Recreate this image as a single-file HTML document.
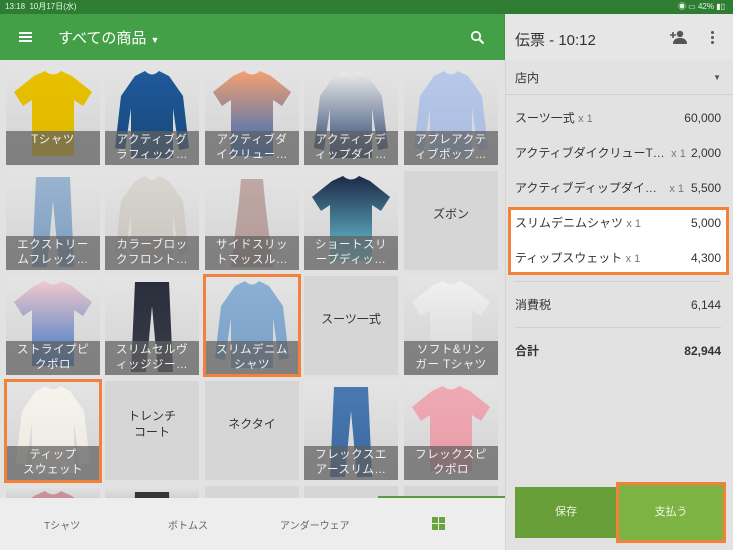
<!DOCTYPE html>
<html><head><meta charset="utf-8"><style>
*{margin:0;padding:0;box-sizing:border-box}
html,body{width:733px;height:550px;overflow:hidden}
body{position:relative;background:#e2e2e2;font-family:"Liberation Sans","Noto Sans CJK JP",sans-serif}
.abs{position:absolute}
svg{display:block}
.tile{position:absolute;width:94px;height:99px;background:#d6d6d6;overflow:hidden}
.img{background:linear-gradient(#e4e4e4,#d2d2d2)}
.lbl{position:absolute;left:0;right:0;bottom:0;height:34px;background:rgba(95,95,95,.72);color:#f2f2f2;font-size:11.5px;line-height:15px;text-align:center;padding-top:2px;letter-spacing:.5px}
.txt{position:absolute;left:0;right:0;top:0;bottom:0;display:flex;align-items:center;justify-content:center;text-align:center;font-size:12px;line-height:16px;color:#333;padding-bottom:14px}
.ob{position:absolute;border:3px solid #f4813a}
.row{position:absolute;left:515px;right:12px;height:16px;font-size:12px;line-height:16px;color:#333;display:flex;justify-content:space-between;align-items:center}
.row i{font-style:normal;color:#777;font-size:11px}
.hr{position:absolute;left:515px;right:12px;height:1px;background:#cfcfcf}
</style></head><body>
<div class="abs" style="left:0;top:0;width:733px;height:14px;background:#2e7d32;color:#e8f5e9;font-size:8px;line-height:14px;padding-left:5px">13:18&nbsp; 10月17日(水)<span style="position:absolute;right:8px">◉ ▭ 42% ▮▯</span></div>
<div class="abs" style="left:0;top:14px;width:505px;height:46px;background:#43a047"></div>
<div class="abs" style="left:19px;top:32px;width:13px;height:2px;background:#fff;box-shadow:0 4px 0 #fff,0 8px 0 #fff"></div>
<div class="abs" style="left:58px;top:27px;color:#fff;font-size:15px">すべての商品 <span style="font-size:9px">▼</span></div>
<svg class="abs" style="left:470px;top:30px" width="15" height="15" viewBox="0 0 15 15"><circle cx="6" cy="6" r="4.2" stroke="#fff" stroke-width="1.8" fill="none"/><path d="M9 9 L13.5 13.5" stroke="#fff" stroke-width="2"/></svg>
<div class="abs" style="left:505px;top:14px;width:228px;height:46px;background:#e6e6e6;box-shadow:0 1px 2px rgba(0,0,0,.2)"></div>
<div class="abs" style="left:515px;top:29px;font-size:15px;color:#333">伝票 - 10:12</div>
<svg class="abs" style="left:669px;top:30px" width="18" height="14" viewBox="0 0 18 14"><circle cx="11" cy="4" r="3.2" fill="#555"/><path d="M4 14 Q4 8 11 8 Q18 8 18 14Z" fill="#555"/><path d="M1 5h6M4 2v6" stroke="#555" stroke-width="1.6"/></svg>
<div class="abs" style="left:711px;top:31px;width:3px;height:3px;background:#555;border-radius:2px;box-shadow:0 5px 0 #555,0 10px 0 #555"></div>

<div id="grid"></div>

<div class="abs" style="left:0;top:498px;width:505px;height:52px;background:#ededed"></div>
<div class="abs" style="left:378px;top:496px;width:127px;height:2px;background:#5a9a3d"></div>
<div class="abs" style="left:44px;top:517px;font-size:10px;color:#666">Tシャツ</div>
<div class="abs" style="left:168px;top:517px;font-size:10px;color:#666">ボトムス</div>
<div class="abs" style="left:280px;top:517px;font-size:10px;color:#666">アンダーウェア</div>
<svg class="abs" style="left:432px;top:517px" width="13" height="13"><rect x="0" y="0" width="6" height="6" fill="#6aa43c"/><rect x="7" y="0" width="6" height="6" fill="#6aa43c"/><rect x="0" y="7" width="6" height="6" fill="#6aa43c"/><rect x="7" y="7" width="6" height="6" fill="#6aa43c"/></svg>

<div class="abs" style="left:505px;top:60px;width:228px;height:490px;background:#e2e2e2;border-left:1px solid #d4d4d4"></div>
<div class="row" style="top:70px">店内<span style="font-size:8px;color:#555">▼</span></div>
<div class="hr" style="top:94px;left:505px;right:0"></div>
<div class="abs" style="left:508px;top:207px;width:221px;height:68px;background:#fff;border:3px solid #f4813a"></div>
<div class="row" style="top:110px"><span>スーツ一式 <i>x 1</i></span><span>60,000</span></div>
<div class="row" style="top:145px"><span>アクティブダイクリューT… <i>&nbsp;x 1</i></span><span>2,000</span></div>
<div class="row" style="top:180px"><span>アクティブディップダイ… <i>&nbsp;&nbsp;&nbsp;x 1</i></span><span>5,500</span></div>
<div class="row" style="top:215px"><span>スリムデニムシャツ <i>x 1</i></span><span>5,000</span></div>
<div class="row" style="top:250px"><span>ティップスウェット <i>x 1</i></span><span>4,300</span></div>
<div class="hr" style="top:281px"></div>
<div class="row" style="top:297px"><span>消費税</span><span>6,144</span></div>
<div class="hr" style="top:327px"></div>
<div class="row" style="top:343px;font-weight:bold"><span>合計</span><span>82,944</span></div>
<div class="abs" style="left:515px;top:487px;width:102px;height:51px;background:#689f38;color:#e8f0e0;font-size:11px;line-height:51px;text-align:center">保存</div>
<div class="abs" style="left:616px;top:482px;width:110px;height:61px;background:#7cb342;border:3px solid #f4813a;color:#f2f8ec;font-size:11px;line-height:55px;text-align:center">支払う</div>

<script>
var X=[6,105,205,304,404],Y=[66,171,276,381,486];
var tee="M28 10 L39 5 Q47 12 55 5 L66 10 L86 26 L77 40 L68 34 L68 90 L26 90 L26 34 L17 40 L8 26 Z";
var ls="M30 10 L40 5 Q47 12 54 5 L64 10 L78 30 L84 82 L74 84 L68 42 L68 92 L26 92 L26 42 L20 84 L10 82 L16 30 Z";
var jn="M30 6 L64 6 L68 96 L53 96 L47 30 L41 96 L26 96 Z";
var dr="M36 8 L58 8 L60 30 L68 96 L26 96 L34 30 Z";
var T=[
[[tee,"#e8c000","#e0b800","Tシャツ"],[ls,"#1f5a9a","#17477a","アクティブグ<br>ラフィック…"],[tee,"#f4a070","#2d6bc0","アクティブダ<br>イクリュー…"],[ls,"#ececec","#27406b","アクティブデ<br>ィップダイ…"],[ls,"#b8c8e8","#a8bce0","アプレアクテ<br>ィブポップ…"]],
[[jn,"#9ab4cf","#7a9cc0","エクストリー<br>ムフレック…"],[ls,"#d8d6d0","#c8c4bc","カラーブロッ<br>クフロント…"],[dr,"#c0a8a4","#b09a98","サイドスリッ<br>トマッスル…"],[tee,"#1c2a48","#6cc8d8","ショートスリ<br>ープディッ…"],[null,"ズボン"]],
[[tee,"#f0c8cc","#3a78c8","ストライプピ<br>クポロ"],[jn,"#2a2e3a","#3a3e4a","スリムセルヴ<br>ィッジジー…"],[ls,"#8cb0d4","#7aa0c8","スリムデニム<br>シャツ"],[null,"スーツ一式"],[tee,"#f0f0f0","#d8d8d8","ソフト&リン<br>ガー Tシャツ"]],
[[ls,"#f6f4ee","#ece8e0","ティップ<br>スウェット"],[null,"トレンチ<br>コート"],[null,"ネクタイ"],[jn,"#4a78b0","#3a68a0","フレックスエ<br>アースリム…"],[tee,"#eeaab4","#e89ca8","フレックスピ<br>クポロ"]],
[[tee,"#c89098","#c0a0a0",""],[jn,"#333","#444",""],[null,""],[null,""],[null,""]]
];
var h="",id=0;
for(var r=0;r<5;r++)for(var c=0;c<5;c++){var d=T[r][c];id++;
 var th=(r==4?12:99);
 var s='<div class="tile'+(d[0]?' img':'')+'" style="left:'+X[c]+'px;top:'+Y[r]+'px;height:'+th+'px">';
 if(d[0]){s+='<svg width="94" height="'+th+'" viewBox="0 0 94 '+th+'"><defs><linearGradient id="g'+id+'" x1="0" y1="0" x2="0" y2="1"><stop offset="0" stop-color="'+d[1]+'"/><stop offset="1" stop-color="'+d[2]+'"/></linearGradient></defs><path d="'+d[0]+'" fill="url(#g'+id+')"/></svg>';
  if(d[3])s+='<div class="lbl">'+d[3]+'</div>';}
 else if(d[1]) s+='<div class="txt">'+d[1]+'</div>';
 h+=s+'</div>';}
h+='<div class="ob" style="left:203px;top:274px;width:98px;height:103px"></div>';
h+='<div class="ob" style="left:4px;top:379px;width:98px;height:104px"></div>';
document.getElementById("grid").innerHTML=h;
</script>
</body></html>
